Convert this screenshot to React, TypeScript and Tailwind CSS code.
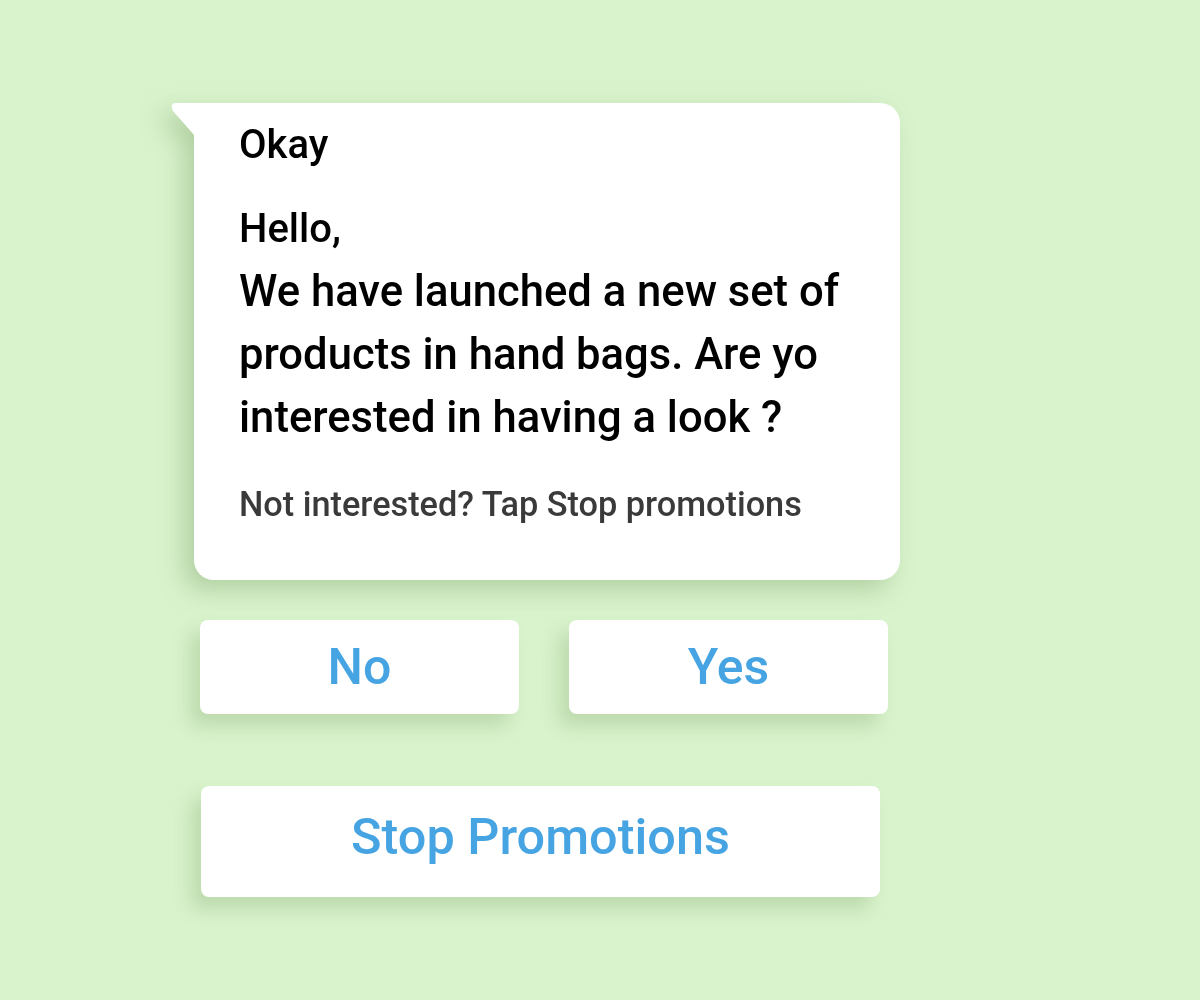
import React from "react";

export default function App() {
  return (
    <div
      className="w-[1200px] h-[1000px] bg-[#d9f3cc] pt-[103px] pl-[171px]"
      style={{ fontFamily: "Roboto, 'Noto Sans', sans-serif" }}
    >
      <div className="relative w-[729px] [filter:drop-shadow(-10px_10px_12px_rgba(90,130,70,0.3))]">
        <svg
          className="absolute left-0 top-0"
          width="24"
          height="34"
          viewBox="0 0 24 34"
        >
          <path d="M5 0 H24 V33 L2 8 Q-1.5 0 5 0 Z" fill="#ffffff" />
        </svg>
        <div className="ml-[23px] w-[706px] h-[477px] bg-white rounded-tr-[20px] rounded-b-[20px] pl-[45px] pt-[18px] font-medium">
          <div className="text-[40px] leading-[48px] text-black">Okay</div>
          <div className="mt-[36px] text-[40px] leading-[48px] text-black">Hello,</div>
          <div className="mt-[7.4px] text-[43.6px] leading-[63px] text-black">
            We have launched a new set of
            <br />
            products in hand bags. Are yo
            <br />
            interested in having a look ?
          </div>
          <div className="mt-[34.6px] text-[34.3px] leading-[40px] text-[#3a3a3a]">
            Not interested? Tap Stop promotions
          </div>
        </div>
      </div>
      <div className="ml-[29px] mt-[40px] flex gap-[50px]">
        <button className="w-[319px] h-[94px] bg-white rounded-[8px] shadow-[-10px_12px_18px_rgba(90,130,70,0.22)] text-[50px] font-medium text-[#47a4e2] flex items-center justify-center">
          No
        </button>
        <button className="w-[319px] h-[94px] bg-white rounded-[8px] shadow-[-10px_12px_18px_rgba(90,130,70,0.22)] text-[50px] font-medium text-[#47a4e2] flex items-center justify-center">
          Yes
        </button>
      </div>
      <button className="ml-[30px] mt-[72px] w-[679px] h-[111px] pb-[9px] bg-white rounded-[8px] shadow-[-10px_12px_18px_rgba(90,130,70,0.22)] text-[50.4px] font-medium text-[#47a4e2] flex items-center justify-center">
        Stop Promotions
      </button>
    </div>
  );
}
